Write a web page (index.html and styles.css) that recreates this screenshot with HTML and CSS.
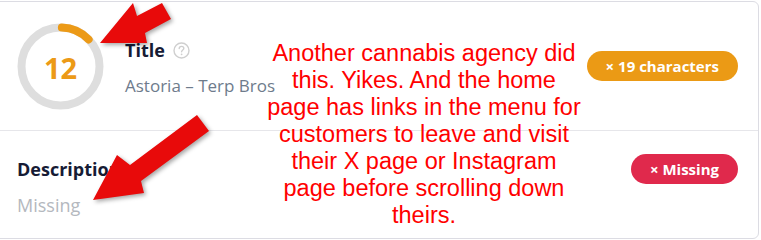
FILE: index.html
```html
<!DOCTYPE html>
<html lang="en">

<head>
  <meta charset="UTF-8">
  <meta name="viewport" content="width=device-width, initial-scale=1.0">
  <title>SEO check</title>
  <link rel="stylesheet" href="styles.css">
</head>

<body>
  <div class="card">
    <div class="row first">
      <div class="gauge">
        <svg width="87" height="87" viewBox="0 0 87 87">
          <circle cx="43.5" cy="43.5" r="39" fill="none" stroke="#dedede" stroke-width="8" />
          <circle cx="43.5" cy="43.5" r="39" fill="none" stroke="#ec9a17" stroke-width="8"
            stroke-linecap="round" stroke-dasharray="30 300" transform="rotate(-88 43.5 43.5)" />
        </svg>
        <span class="score">12</span>
      </div>
      <div class="info">
        <p class="label">Title
          <svg class="help" width="17" height="17" viewBox="0 0 17 17">
            <circle cx="8.5" cy="8.5" r="7.5" fill="none" stroke="#cfcfcf" stroke-width="1.4" />
            <path d="M6.2 6.6c0-1.4 1-2.2 2.3-2.2s2.3.8 2.3 2c0 1.6-2.2 1.7-2.2 3.4" fill="none" stroke="#cfcfcf"
              stroke-width="1.4" stroke-linecap="round" />
            <circle cx="8.6" cy="12.3" r=".9" fill="#cfcfcf" />
          </svg>
        </p>
        <p class="value">Astoria – Terp Bros</p>
      </div>
      <span class="badge warn">× 19 characters</span>
    </div>
    <div class="row second">
      <div class="info">
        <p class="label">Description</p>
        <p class="value empty">Missing</p>
      </div>
      <span class="badge bad">× Missing</span>
    </div>
  </div>

  <p class="note">Another cannabis agency did<br>this. Yikes. And the home<br>page has links in the menu for<br>customers to leave and visit<br>their X page or Instagram<br>page before scrolling down<br>theirs.</p>

  <svg class="arrows" width="761" height="240" viewBox="0 0 761 240">
    <polygon points="100,43 133,3 137,16 162,3 171,19 145,33 147,43" />
    <polygon points="93,200 117,155 130,165 197,115 209,131 141,181 144,193" />
  </svg>
</body>

</html>
```

FILE: styles.css
```css
* {
  margin: 0;
  padding: 0;
  box-sizing: border-box;
}

body {
  font-family: "Open Sans", "Noto Sans", sans-serif;
  background: #fff;
  width: 761px;
  height: 240px;
  overflow: hidden;
  position: relative;
}

.card {
  margin: 1px 2px 0 -10px;
  border: 1px solid #dcdce3;
  border-radius: 6px;
}

.row {
  display: flex;
  align-items: center;
  padding: 0 20px 0 26px;
}

.row.first {
  height: 129px;
  border-bottom: 1px solid #e6e6ea;
}

.row.second {
  height: 107px;
}

.gauge {
  width: 87px;
  height: 87px;
  position: relative;
  display: flex;
  align-items: center;
  justify-content: center;
  margin-right: 21px;
}

.gauge svg {
  position: absolute;
  top: 0;
  left: 0;
}

.score {
  font-size: 29px;
  font-weight: 700;
  color: #ec9a17;
  position: relative;
  top: 1px;
}

.info {
  padding-top: 4px;
}

.second .info {
  padding-top: 5px;
}

.label {
  font-size: 18px;
  line-height: 24px;
  font-weight: 700;
  color: #161b35;
  display: flex;
  align-items: center;
}

.help {
  margin-left: 8px;
}

.value {
  margin-top: 12px;
  font-size: 17px;
  line-height: 24px;
  color: #6e7b8c;
}

.value.empty {
  font-size: 18px;
  color: #b4b8be;
}

.badge {
  margin-left: auto;
  height: 30px;
  border-radius: 15px;
  color: #fff;
  font-size: 15px;
  font-weight: 700;
  display: flex;
  align-items: center;
  padding: 0 19px;
}

.badge.warn {
  background: #eb9a15;
}

.badge.bad {
  background: #e0294c;
  align-self: flex-start;
  margin-top: 23px;
}

.note {
  position: absolute;
  top: 40px;
  left: 254px;
  width: 340px;
  text-align: center;
  font-family: "Liberation Sans", Arial, sans-serif;
  font-size: 23.5px;
  line-height: 27px;
  color: #f00;
  white-space: nowrap;
}

.arrows {
  position: absolute;
  top: 0;
  left: 0;
  fill: #e80a0a;
  filter: drop-shadow(2px 2px 2px rgba(0, 0, 0, .35));
}
```
